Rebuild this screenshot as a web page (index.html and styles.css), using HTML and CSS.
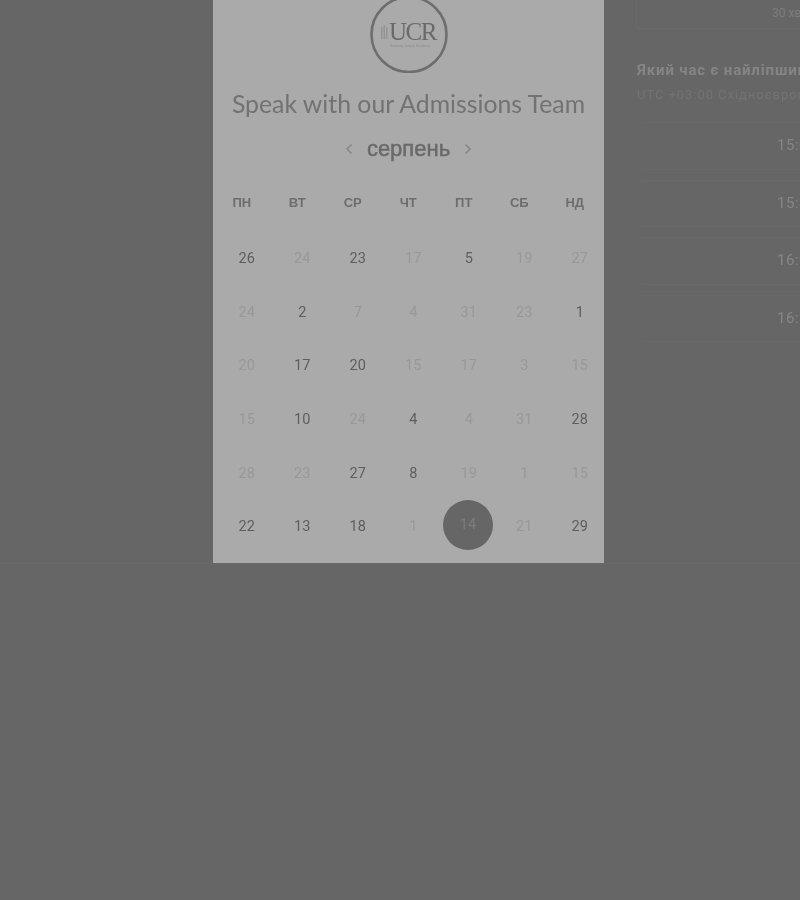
FILE: index.html
```html
<!DOCTYPE html>
<html lang="uk">
<head>
  <meta charset="UTF-8">
  <title>Speak with our Admissions Team</title>
  <meta name="viewport" content="width=device-width, initial-scale=1.0">
  <link rel="stylesheet" href="styles.css">
</head>
<body>

<div class="sheet">
  <div class="panel">
    <svg class="logo" width="78" height="73" viewBox="0 4 78 73">
      <circle cx="39" cy="38.500" r="37.500" fill="none" stroke="#6e6e6e" stroke-width="2.600"/>
      <rect x="11" y="31" width="1.500" height="12" fill="#949494"/>
      <rect x="13.500" y="29" width="1.500" height="14" fill="#949494"/>
      <rect x="16" y="31" width="1.500" height="12" fill="#949494"/>
      <text x="19" y="44" class="logo-name">UCR</text>
      <text x="40" y="51" class="logo-sub">University Campus Residence</text>
    </svg>

    <h1 class="title">Speak with our Admissions Team</h1>

    <div class="month">
      <svg width="8" height="12" viewBox="0 0 8 12"><path d="M6.500 1.500L2 6l4.500 4.500" fill="none" stroke="#868686" stroke-width="1.500"/></svg>
      <span class="month-name">серпень</span>
      <svg width="8" height="12" viewBox="0 0 8 12"><path d="M1.500 1.500L6 6l-4.500 4.500" fill="none" stroke="#868686" stroke-width="1.500"/></svg>
    </div>

    <div class="weekdays">
      <span>ПН</span><span>ВТ</span><span>СР</span><span>ЧТ</span><span>ПТ</span><span>СБ</span><span>НД</span>
    </div>

    <div class="days">
      <span class="day">26</span><span class="day off">24</span><span class="day">23</span><span class="day off">17</span><span class="day">5</span><span class="day off">19</span><span class="day off">27</span>
      <span class="day off">24</span><span class="day">2</span><span class="day off">7</span><span class="day off">4</span><span class="day off">31</span><span class="day off">23</span><span class="day">1</span>
      <span class="day off">20</span><span class="day">17</span><span class="day">20</span><span class="day off">15</span><span class="day off">17</span><span class="day off">3</span><span class="day off">15</span>
      <span class="day off">15</span><span class="day">10</span><span class="day off">24</span><span class="day">4</span><span class="day off">4</span><span class="day off">31</span><span class="day">28</span>
      <span class="day off">28</span><span class="day off">23</span><span class="day">27</span><span class="day">8</span><span class="day off">19</span><span class="day off">1</span><span class="day off">15</span>
      <span class="day">22</span><span class="day">13</span><span class="day">18</span><span class="day off">1</span><span class="day selected">14</span><span class="day off">21</span><span class="day">29</span>
    </div>
  </div>

  <div class="side">
    <div class="duration"><span>30 хв</span></div>
    <h2 class="side-title">Який час є найліпшим для вас?</h2>
    <p class="zone">UTC +03:00 Східноєвропейський час</p>
    <div class="slots">
      <div class="slot">15:00</div>
      <div class="slot">15:30</div>
      <div class="slot">16:00</div>
      <div class="slot">16:30</div>
    </div>
  </div>
</div>

</body>
</html>
```

FILE: styles.css
```css
html, body {
  margin: 0;
  height: 900px;
  overflow: hidden;
  background: #666;
}
.sheet {
  display: flex;
  height: 563px;
  padding-left: 213px;
  border-bottom: 1px solid #696969;
  overflow: hidden;
  filter: grayscale(1) blur(0.4px);
}
.panel {
  flex: none;
  box-sizing: border-box;
  width: 391px;
  height: 563px;
  background: #aaa;
  text-align: center;
}
.logo {
  display: block;
  margin: 0 auto;
}
.logo-name {
  font-family: "Liberation Serif", serif;
  font-size: 25px;
  letter-spacing: -1.500px;
  fill: #6a6a6a;
}
.logo-sub {
  font-family: "Liberation Sans", sans-serif;
  font-size: 3px;
  text-anchor: middle;
  fill: #8c8c8c;
}
.title {
  margin: 15px 0 0;
  font-family: Lato, sans-serif;
  font-size: 24.800px;
  line-height: 32px;
  font-weight: 400;
  color: #727272;
}
.month {
  display: flex;
  align-items: center;
  justify-content: center;
  gap: 14px;
  margin-top: 14px;
  height: 30px;
}
.month-name {
  font-family: "Liberation Sans", sans-serif;
  font-size: 22px;
  -webkit-text-stroke: 0.5px #6a6a6a;
  color: #6a6a6a;
}
.weekdays {
  display: grid;
  grid-template-columns: repeat(7, 55.500px);
  margin: 30px 0 0 1px;
  font-family: "Liberation Sans", sans-serif;
  font-size: 13px;
  line-height: 18px;
  font-weight: 700;
  color: #6e6e6e;
}
.days {
  display: grid;
  grid-template-columns: repeat(7, 55.500px);
  grid-auto-rows: 53.600px;
  margin: 20px 0 0 6px;
  font-family: Roboto, sans-serif;
  font-size: 14.500px;
  color: #5e5e5e;
}
.day {
  display: flex;
  align-items: center;
  justify-content: center;
}
.day.off {
  color: #989898;
}
.day.selected {
  width: 50px;
  height: 50px;
  margin: 0 auto 3.600px 2px;
  border-radius: 50%;
  background: #666;
  color: #7c7c7c;
}
.side {
  flex: none;
  width: 340px;
  margin-left: 32px;
  font-family: Roboto, sans-serif;
}
.duration {
  box-sizing: border-box;
  height: 29px;
  padding: 6px 0 0 135px;
  border: 1px solid #6a6a6a;
  border-top: none;
  font-size: 12px;
  line-height: 15px;
  color: #7e7e7e;
}
.side-title {
  margin: 32px 0 0 1px;
  font-size: 15px;
  line-height: 18px;
  font-weight: 700;
  letter-spacing: 0.85px;
  white-space: nowrap;
  color: #858585;
}
.zone {
  margin: 7px 0 0 1px;
  font-size: 13px;
  line-height: 18px;
  letter-spacing: 0.95px;
  white-space: nowrap;
  color: #737373;
}
.slots {
  display: flex;
  flex-direction: column;
  gap: 10px;
  margin: 18px 0 0 5px;
}
.slot {
  box-sizing: border-box;
  width: 312px;
  height: 47.500px;
  border: 1px solid #696969;
  font-size: 15px;
  line-height: 45px;
  text-align: center;
  letter-spacing: 0.5px;
  color: #868686;
}
```
